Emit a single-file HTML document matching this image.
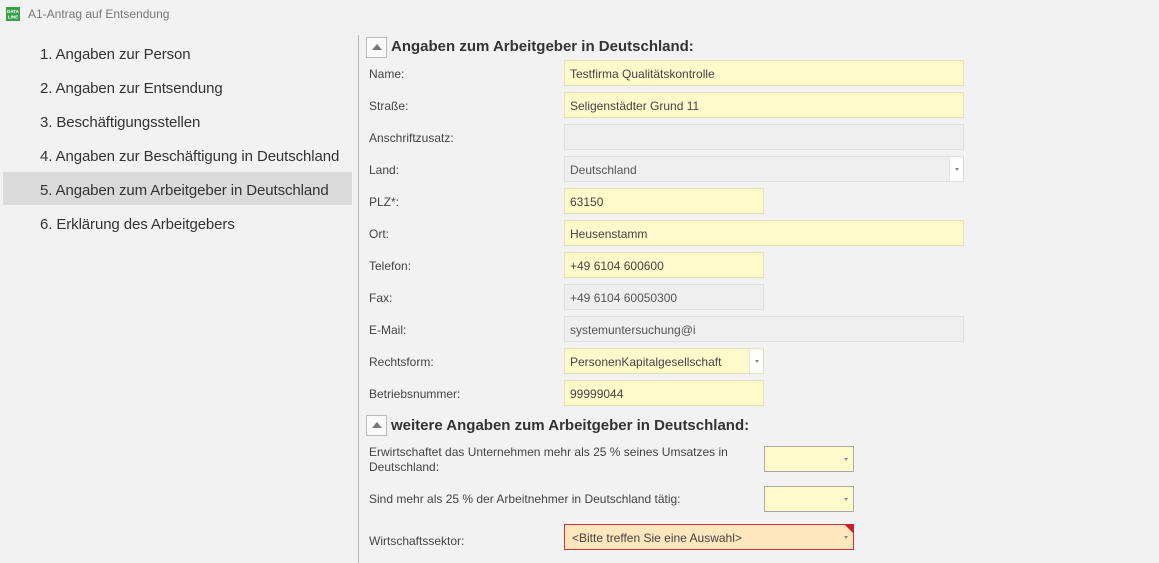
<!DOCTYPE html>
<html><head><meta charset="utf-8"><style>
*{margin:0;padding:0;box-sizing:border-box}
body{width:1159px;height:563px;background:#f2f2f2;font-family:"Liberation Sans",sans-serif;position:relative;overflow:hidden;color:#333}
.abs{position:absolute}
.title{left:28px;top:7px;font-size:12px;color:#777}
.nav{left:40px;font-size:15px;color:#333;line-height:20px;letter-spacing:-0.1px}
.sel{left:3px;top:172px;width:349px;height:33px;background:#dadada}
.div{left:358px;top:35px;width:1px;height:528px;background:#b8b8b8}
.lbl{left:369px;font-size:12px;color:#444}
.in{left:564px;height:26px;border:1px solid #e6e2b4;background:#fffacb;font-size:12px;color:#444;padding:6px 0 0 5px;white-space:nowrap;overflow:hidden}
.gr{background:#efefef;border-color:#dedede;color:#555}
.btn{left:366px;width:21px;height:21px;border:1px solid #b9b9b9;background:#fafafa}
.btn:after{content:"";position:absolute;left:5px;top:6px;border-left:5px solid transparent;border-right:5px solid transparent;border-bottom:6px solid #777}
.hd{left:391px;font-size:15px;font-weight:bold;color:#333}
.dd{position:absolute;right:0;top:0;width:14px;height:24px}
.dd:after{content:"";position:absolute;left:5px;top:11px;border-left:2.5px solid transparent;border-right:2.5px solid transparent;border-top:3px solid #888}
.cb{height:26px;border:1px solid #aaa;background:#fffacb}
</style></head><body>
<svg class="abs" style="left:6px;top:7px" width="14" height="14"><rect width="14" height="14" fill="#3aa14a"/><text x="7" y="6" font-size="4.5" fill="#fff" text-anchor="middle" font-family="Liberation Sans" font-weight="bold">DATA</text><text x="7" y="11.5" font-size="4.5" fill="#fff" text-anchor="middle" font-family="Liberation Sans" font-weight="bold">LINE</text></svg>
<div class="abs title">A1-Antrag auf Entsendung</div>
<div class="abs sel"></div>
<div class="abs nav" style="top:45px">1. Angaben zur Person</div>
<div class="abs nav" style="top:79px">2. Angaben zur Entsendung</div>
<div class="abs nav" style="top:113px">3. Beschäftigungsstellen</div>
<div class="abs nav" style="top:147px">4. Angaben zur Beschäftigung in Deutschland</div>
<div class="abs nav" style="top:181px">5. Angaben zum Arbeitgeber in Deutschland</div>
<div class="abs nav" style="top:215px">6. Erklärung des Arbeitgebers</div>
<div class="abs div"></div>

<div class="abs btn" style="top:37px"></div>
<div class="abs hd" style="top:38px">Angaben zum Arbeitgeber in Deutschland:</div>

<div class="abs lbl" style="top:67px">Name:</div><div class="abs in" style="top:60px;width:400px">Testfirma Qualitätskontrolle</div>
<div class="abs lbl" style="top:99px">Straße:</div><div class="abs in" style="top:92px;width:400px">Seligenstädter Grund 11</div>
<div class="abs lbl" style="top:131px">Anschriftzusatz:</div><div class="abs in gr" style="top:124px;width:400px"></div>
<div class="abs lbl" style="top:163px">Land:</div><div class="abs in gr" style="top:156px;width:400px">Deutschland<div class="dd" style="background:#fff;border-left:1px solid #e3e3e3"></div></div>
<div class="abs lbl" style="top:195px">PLZ*:</div><div class="abs in" style="top:188px;width:200px">63150</div>
<div class="abs lbl" style="top:227px">Ort:</div><div class="abs in" style="top:220px;width:400px">Heusenstamm</div>
<div class="abs lbl" style="top:259px">Telefon:</div><div class="abs in" style="top:252px;width:200px">+49 6104 600600</div>
<div class="abs lbl" style="top:291px">Fax:</div><div class="abs in gr" style="top:284px;width:200px">+49 6104 60050300</div>
<div class="abs lbl" style="top:323px">E-Mail:</div><div class="abs in gr" style="top:316px;width:400px">systemuntersuchung@i</div>
<div class="abs lbl" style="top:355px">Rechtsform:</div><div class="abs in" style="top:348px;width:200px">PersonenKapitalgesellschaft<div class="dd" style="background:#fff;border-left:1px solid #e3e3e3"></div></div>
<div class="abs lbl" style="top:387px">Betriebsnummer:</div><div class="abs in" style="top:380px;width:200px">99999044</div>

<div class="abs btn" style="top:415px"></div>
<div class="abs hd" style="top:417px">weitere Angaben zum Arbeitgeber in Deutschland:</div>

<div class="abs lbl" style="top:445px;line-height:15px;width:380px">Erwirtschaftet das Unternehmen mehr als 25 % seines Umsatzes in Deutschland:</div>
<div class="abs cb" style="left:764px;top:446px;width:90px"><div class="dd"></div></div>
<div class="abs lbl" style="top:492px">Sind mehr als 25 % der Arbeitnehmer in Deutschland tätig:</div>
<div class="abs cb" style="left:764px;top:486px;width:90px"><div class="dd"></div></div>
<div class="abs lbl" style="top:534px">Wirtschaftssektor:</div>
<div class="abs" style="left:564px;top:524px;width:290px;height:26px;border:1px solid #d0303a;background:#ffe7bd;font-size:12px;color:#444;padding:6px 0 0 7px">&lt;Bitte treffen Sie eine Auswahl&gt;<div class="dd"></div>
<svg style="position:absolute;right:-1px;top:-1px" width="10" height="10"><polygon points="0,0 10,0 10,10" fill="#c8202c"/></svg></div>
</body></html>
